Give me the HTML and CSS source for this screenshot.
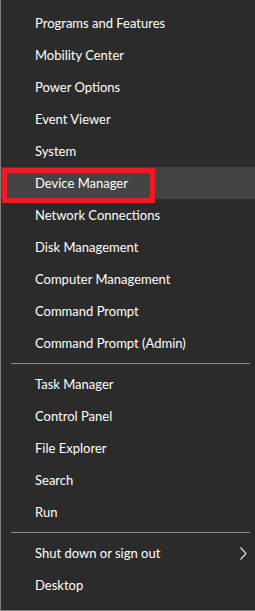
FILE: index.html
```html
<!DOCTYPE html>
<html lang="en">
<head>
    <meta charset="UTF-8">
    <title>Quick Link Menu</title>
    <link rel="stylesheet" href="styles.css">
</head>
<body>
    <div class="menu">
        <ul class="group">
            <li>Programs and Features</li>
            <li>Mobility Center</li>
            <li>Power Options</li>
            <li>Event Viewer</li>
            <li>System</li>
            <li class="active">Device Manager</li>
            <li>Network Connections</li>
            <li>Disk Management</li>
            <li>Computer Management</li>
            <li>Command Prompt</li>
            <li>Command Prompt (Admin)</li>
        </ul>
        <div class="sep"></div>
        <ul class="group">
            <li>Task Manager</li>
            <li>Control Panel</li>
            <li>File Explorer</li>
            <li>Search</li>
            <li>Run</li>
        </ul>
        <div class="sep"></div>
        <ul class="group">
            <li class="sub">Shut down or sign out
                <svg class="chevron" width="7" height="13" viewBox="0 0 7 13">
                    <polyline points="0.5,0.5 6,6.5 0.5,12.5" fill="none" stroke="#d6dde8" stroke-width="1.2"/>
                </svg>
            </li>
            <li>Desktop</li>
        </ul>
    </div>
</body>
</html>
```

FILE: styles.css
```css
html, body {
    margin: 0;
    height: 100%;
}

body {
    background: #2b2b2b;
    font-family: "Lato", "Noto Sans", sans-serif;
    font-size: 13px;
    color: #ffffff;
}

.menu {
    box-sizing: border-box;
    height: 611px;
    padding-top: 7px;
    border-left: 1px solid #7f7f7f;
    border-bottom: 1px solid #7f7f7f;
}

.group {
    list-style: none;
    margin: 0;
    padding: 0;
}

.group li {
    position: relative;
    display: flex;
    align-items: center;
    justify-content: space-between;
    height: 32px;
    padding: 0 8px 0 34px;
    white-space: nowrap;
}

.group li.active {
    background: #444444;
}

/* red marker box round the selected item */
.group li.active::after {
    content: "";
    position: absolute;
    top: 1px;
    left: 1px;
    width: 153px;
    height: 35px;
    box-sizing: border-box;
    border: 5px solid #ed1c24;
}

.sep {
    height: 1px;
    margin: 4px 5px 4px 10px;
    background: #8a8a8a;
}

.chevron {
    display: block;
}
```
